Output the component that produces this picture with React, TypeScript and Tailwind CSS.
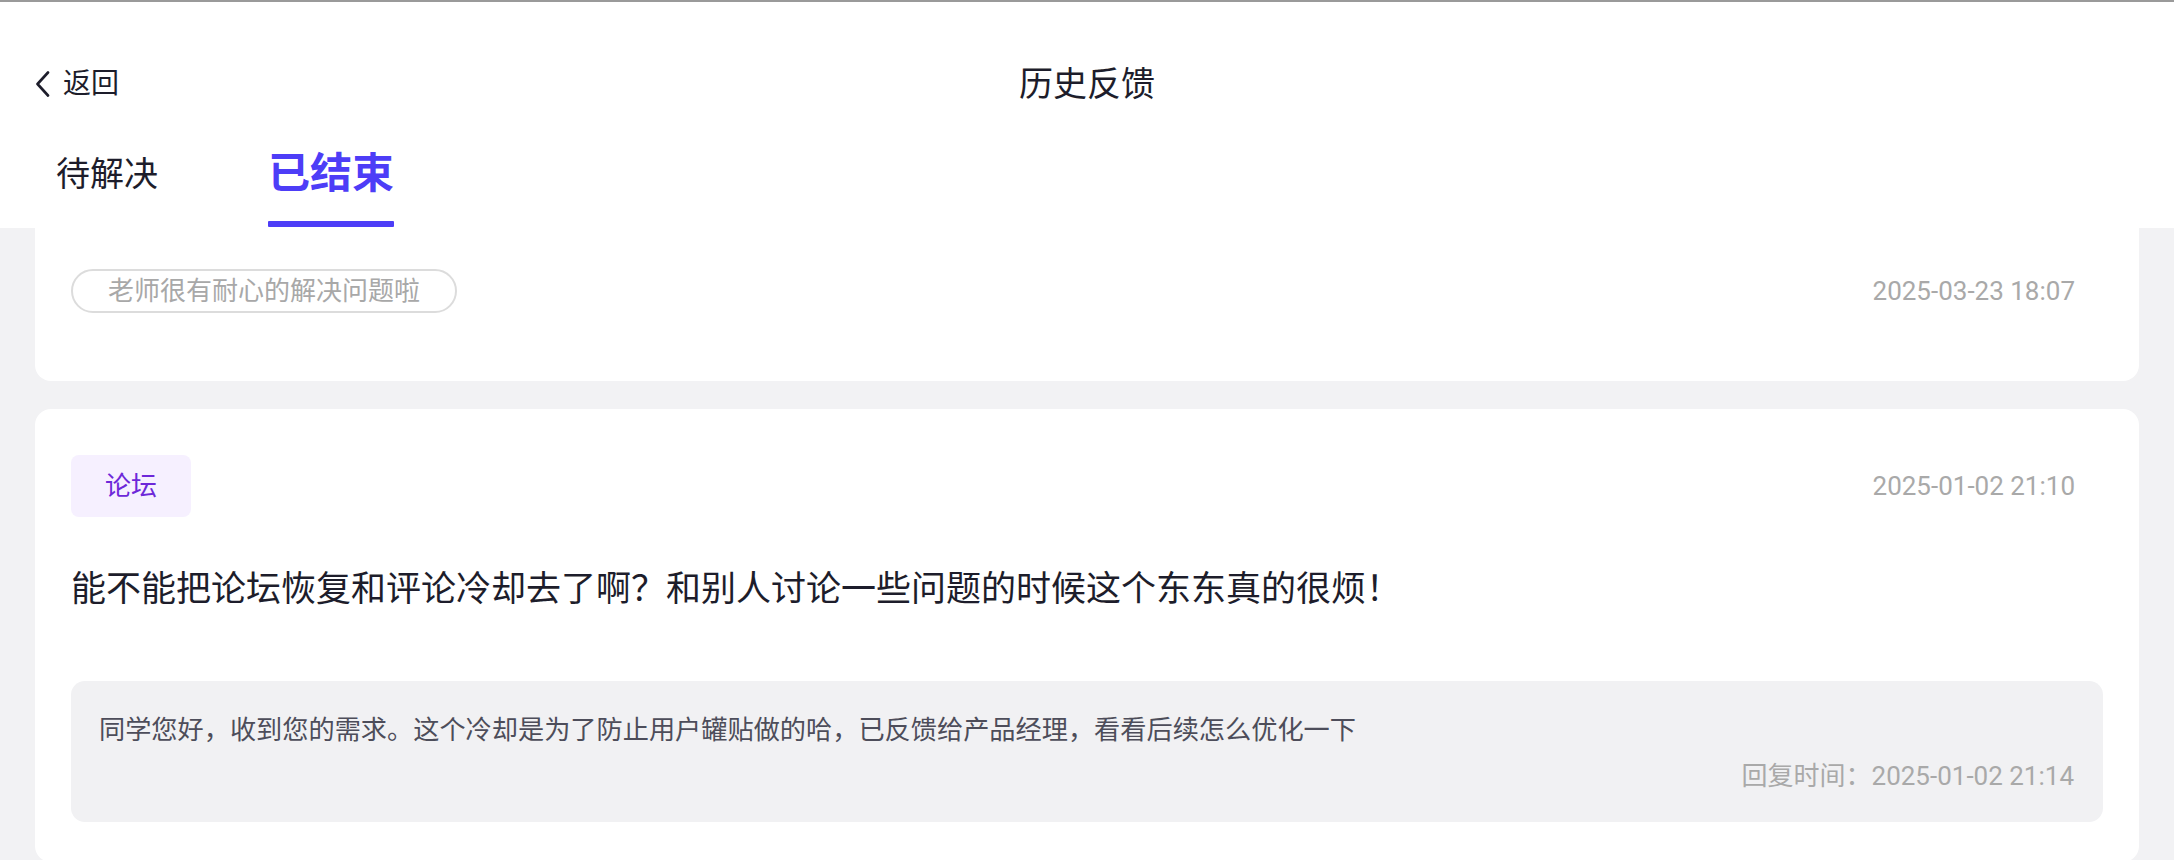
import React from "react";

const FONT = "font-['Roboto','Noto_Sans_CJK_SC',sans-serif]";

function BackChevron() {
  return (
    <svg width="16" height="26" viewBox="0 0 16 26" fill="none">
      <polyline
        points="13,1.5 2.5,13 13,24.5"
        stroke="#1d1d2b"
        strokeWidth="2.6"
        strokeLinecap="round"
        strokeLinejoin="round"
      />
    </svg>
  );
}

function Header() {
  return (
    <header className="bg-white border-t-2 border-[#9a9a9a] h-[228px] shrink-0">
      {/* nav row */}
      <div className="grid grid-cols-3 items-center h-[64px] mt-[50px]">
        <div className="flex items-center gap-[12px] pl-[35px]">
          <BackChevron />
          <span className="text-[28px] leading-none text-[#1d1d2b]">返回</span>
        </div>
        <h1 className="justify-self-center text-[34px] leading-none text-[#1d1d2b]">历史反馈</h1>
        <div />
      </div>

      {/* tabs */}
      <div className="flex items-start gap-[110px] pl-[56px] pt-[33px]">
        <div className="flex flex-col items-center">
          <span className="text-[34px] leading-[50px] text-[#1d1d2b]">待解决</span>
          <span className="mt-[22px] h-[6px] w-full" />
        </div>
        <div className="flex flex-col items-stretch">
          <span className="text-[42px] leading-[50px] font-bold text-[#4d3df7]">已结束</span>
          <span className="mt-[22px] h-[6px] w-full bg-[#4d3df7] rounded-[1px]" />
        </div>
      </div>
    </header>
  );
}

function FeedbackCard() {
  return (
    <div className="mt-[28px] bg-white rounded-[16px] pt-[46px] px-[36px] pb-[40px]">
      <div className="flex items-center justify-between">
        <span className="h-[62px] px-[34px] flex items-center rounded-[8px] bg-[#f6f0ff] text-[26px] text-[#6d28d9]">
          论坛
        </span>
        <span className="mr-[28px] text-[26px] text-[#a9a9a9]">2025-01-02 21:10</span>
      </div>

      <p className="mt-[48px] text-[35px] leading-[50px] text-[#1d1d2b]">
        能不能把论坛恢复和评论冷却去了啊？和别人讨论一些问题的时候这个东东真的很烦！
      </p>

      <div className="mt-[66px] bg-[#f1f1f3] rounded-[14px] pt-[31px] pb-[28px] pl-[28px] pr-[29px]">
        <p className="text-[26.2px] leading-[36px] text-[#4d4d5a]">
          同学您好，收到您的需求。这个冷却是为了防止用户罐贴做的哈，已反馈给产品经理，看看后续怎么优化一下
        </p>
        <p className="mt-[10px] text-right text-[26px] leading-[36px] text-[#a9a9a9]">
          回复时间：2025-01-02 21:14
        </p>
      </div>
    </div>
  );
}

export default function App() {
  return (
    <div className={`w-[2174px] h-[860px] overflow-hidden flex flex-col bg-[#f2f2f4] ${FONT}`}>
      <Header />

      <div className="px-[35px]">
        {/* previous card, scrolled mostly under the header */}
        <div className="bg-white rounded-b-[16px] flex items-center justify-between pl-[36px] pr-[64px] pt-[41px] pb-[68px]">
          <span className="h-[44px] px-[35px] flex items-center rounded-full border-2 border-[#dcdcdc] text-[26px] text-[#a8a8a8]">
            老师很有耐心的解决问题啦
          </span>
          <span className="text-[26px] text-[#a9a9a9]">2025-03-23 18:07</span>
        </div>

        <FeedbackCard />
      </div>
    </div>
  );
}
